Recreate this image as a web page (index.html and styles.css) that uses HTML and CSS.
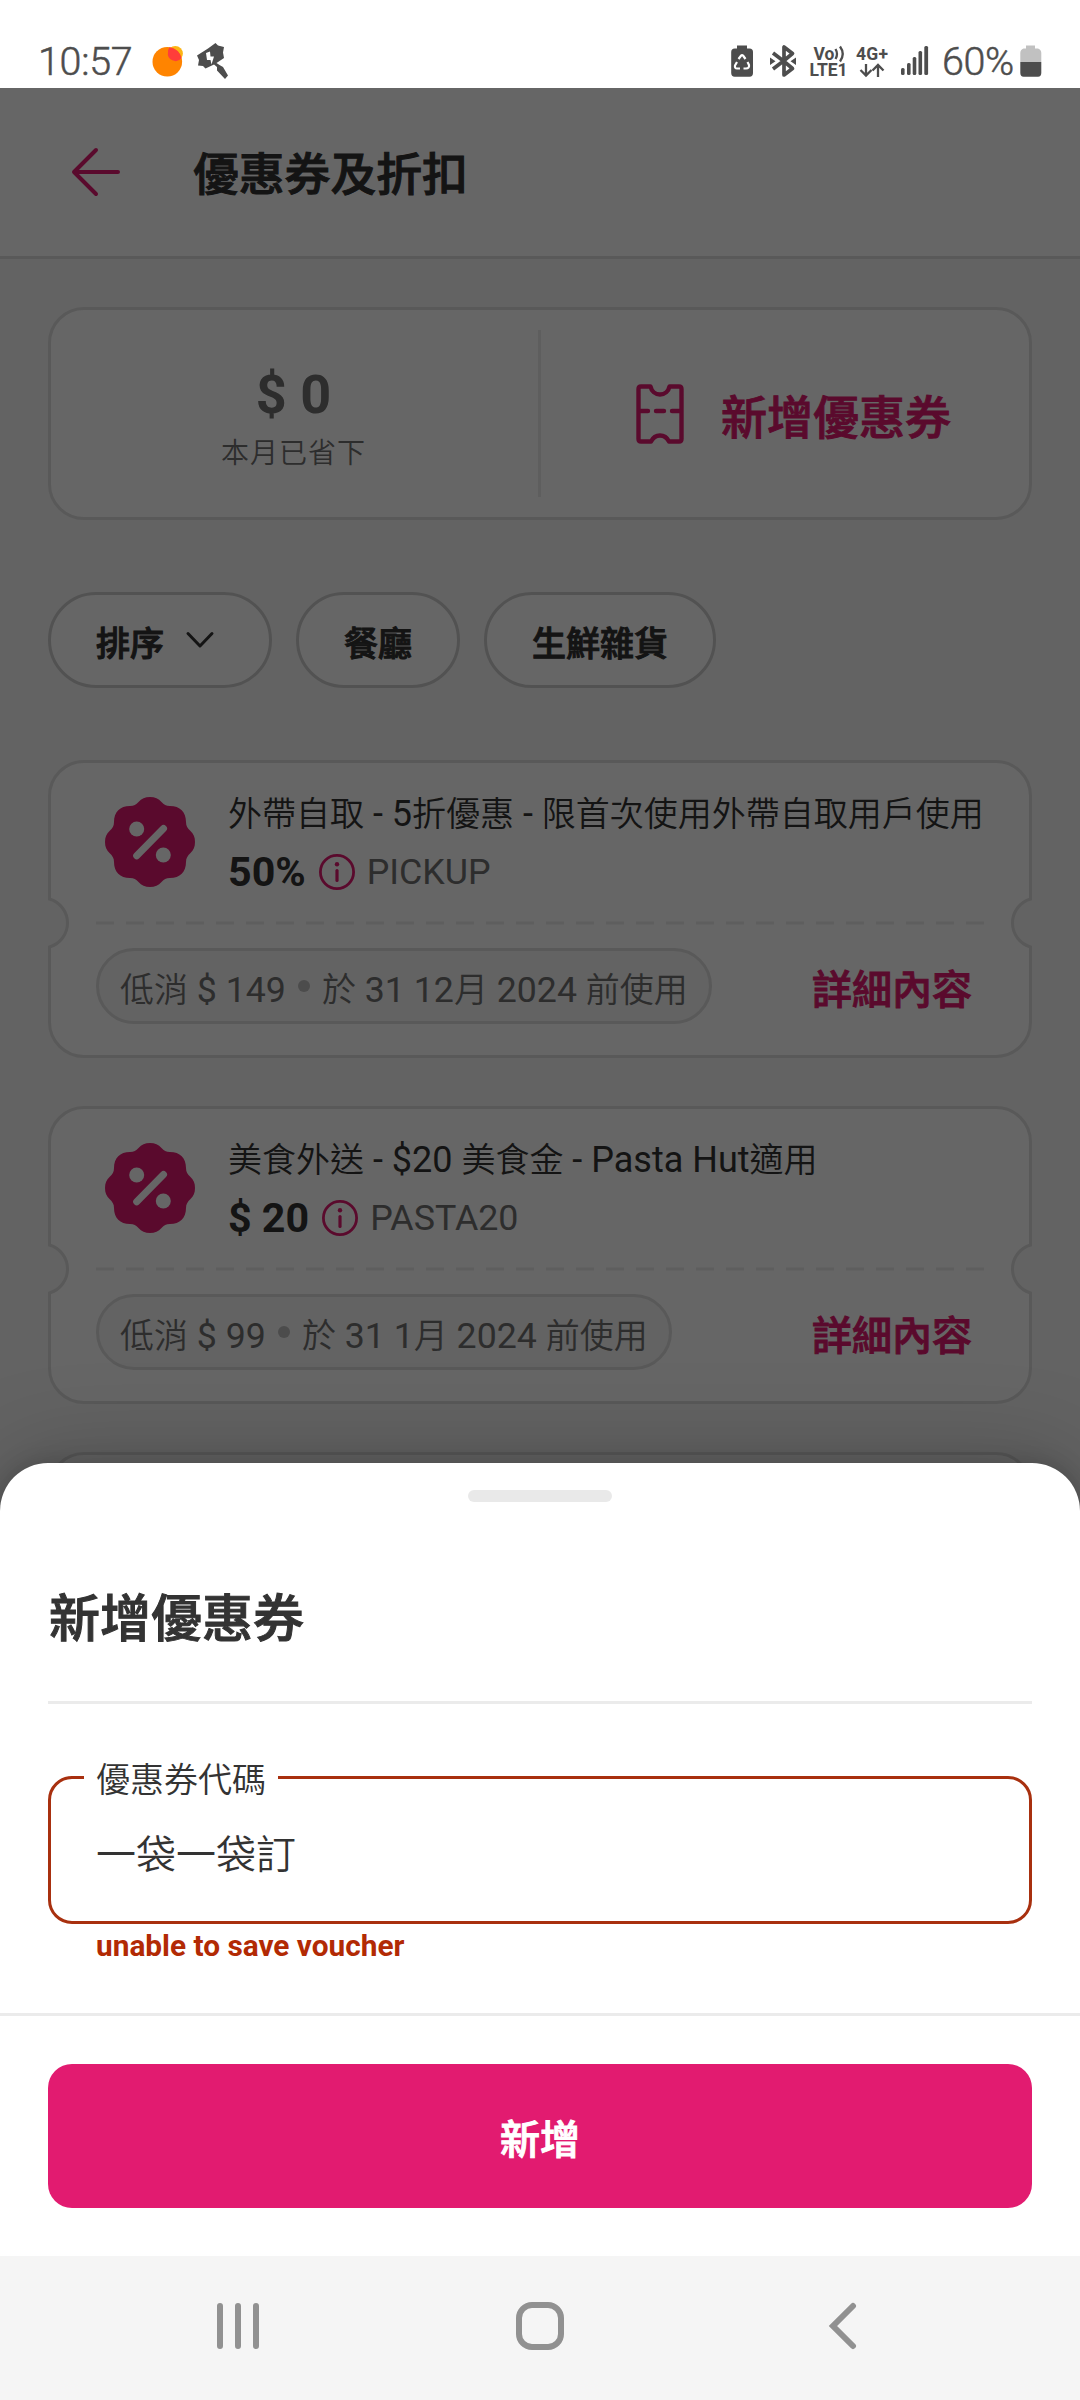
FILE: index.html
```html
<!DOCTYPE html>
<html lang="zh-Hant">
<head>
<meta charset="utf-8">
<title>優惠券及折扣</title>
<link rel="stylesheet" href="styles.css">
</head>
<body>
<svg class="defs" width="0" height="0">
  <symbol id="badge" viewBox="0 0 90 90">
    <path fill="#e21b70" d="M45 0C50 0 53.500 1.500 56.500 5C59 7.800 61 9 65 9C75 9 81 15 81 25C81 29 82.500 31 85.500 34C88.500 37 90 40 90 45C90 50 88.500 53 85.500 56C82.500 59 81 61 81 65C81 75 75 81 65 81C61 81 59 82.200 56.500 85C53.500 88.500 50 90 45 90C40 90 36.500 88.500 33.500 85C31 82.200 29 81 25 81C15 81 9 75 9 65C9 61 7.500 59 4.500 56C1.500 53 0 50 0 45C0 40 1.500 37 4.500 34C7.500 31 9 29 9 25C9 15 15 9 25 9C29 9 31 7.800 33.500 5C36.500 1.500 40 0 45 0Z"/>
    <circle cx="31.700" cy="32" r="7.500" fill="#fff"/>
    <circle cx="58.300" cy="58" r="7.500" fill="#fff"/>
    <path d="M58.500 31.500L31.700 58.700" stroke="#fff" stroke-width="7" stroke-linecap="round"/>
  </symbol>
  <symbol id="info" viewBox="0 0 36 36">
    <circle cx="18" cy="18" r="16.600" fill="none" stroke="#e21b70" stroke-width="2.800"/>
    <circle cx="18" cy="10.200" r="2.200" fill="#e21b70"/>
    <path d="M18 16.500V26.500" stroke="#e21b70" stroke-width="3.200" stroke-linecap="round"/>
  </symbol>
  <symbol id="ticket-frame" viewBox="0 0 984 298">
    <path fill="#fff" stroke="#dedede" stroke-width="3" d="M36 1.500H948A34.500 34.500 0 0 1 982.500 36V139A25 25 0 0 0 982.500 187V262A34.500 34.500 0 0 1 948 296.500H36A34.500 34.500 0 0 1 1.500 262V187A25 25 0 0 0 1.500 139V36A34.500 34.500 0 0 1 36 1.500Z"/>
    <path stroke="#ebebeb" stroke-width="3" stroke-dasharray="18 12" d="M48 163H936"/>
  </symbol>
</svg>
<div class="screen">
  <header class="status">
    <span class="clock">10:57</span>
    <svg class="status-left" width="80" height="44" viewBox="148 38 80 44">
      <circle cx="175.300" cy="53.500" r="7.600" fill="#fcb414"/>
      <circle cx="167.300" cy="61.700" r="14.800" fill="#ff8400"/>
      <path d="M168 52A7.600 7.600 0 0 0 181.500 58A15 15 0 0 0 169.500 47.200A7.600 7.600 0 0 0 168 52Z" fill="#ff3d3a"/>
      <path fill="#4d4d4d" fill-rule="evenodd" d="M215.500 43L218 45.500L224 47L223 52.500L224 58L216.500 63L219.500 65L223 67L228 75.500L225 79L217 70.500L217 67L214 64.500L205.500 68.500L203 66L198 65.500L199 60L197 55.500L208 48.500ZM206 53L207 60H210.500L211.500 64.500L214 56.500H210.500L210 51.500Z"/>
    </svg>
    <svg class="status-icons" width="202" height="44" viewBox="730 38 202 44">
      <g fill="#4d4d4d">
        <path d="M737 48.500V45.500H747V48.500H749.500Q753 48.500 753 52V73Q753 76.700 749.500 76.700H734.700Q731.200 76.700 731.200 73V52Q731.200 48.500 734.700 48.500Z"/>
        <path d="M770 57.500L775.500 61.200L770 65ZM796 57.500L790.500 61.200L796 65Z"/>
        <rect x="901" y="68" width="3.600" height="7" rx="1.500"/><rect x="907" y="63" width="3.600" height="12" rx="1.500"/><rect x="912.700" y="57" width="3.600" height="18" rx="1.500"/><rect x="918.500" y="51" width="3.600" height="24" rx="1.500"/><rect x="924.300" y="46" width="3.800" height="29" rx="1.500"/>
      </g>
      <path fill="none" stroke="#fff" stroke-width="2.200" stroke-linejoin="round" d="M738.500 59L741.200 55.500Q742 54.500 743 55.500L745.500 59M747.500 62L749 65Q749.500 68.500 746 68.500H743.500M740 68.500H737Q734.500 68.500 735 65.500L737 62"/>
      <path fill="none" stroke="#4d4d4d" stroke-width="3.700" stroke-linejoin="round" d="M773 53L783.500 61L792.500 53.500L784 47V75L792.500 68.500L783.500 61L773 69"/>
      <g fill="none" stroke="#4d4d4d" stroke-width="2.300"><path d="M835.500 49Q838.500 54 835.500 59M840 46.500Q845.500 54 840 61.500M866 64V75M860.500 70L866 75.500L871.500 70M878 77V65M872.500 70.500L878 65L883.500 70.500"/></g>
      <g class="net" fill="#4d4d4d"><text x="813.500" y="59.500" textLength="21">Vo</text><text x="809.500" y="76" textLength="38">LTE1</text><text x="856" y="59.500" textLength="32">4G+</text></g>
    </svg>
    <span class="percent">60%</span>
    <svg class="battery" width="22" height="32" viewBox="0 0 22 32">
      <path fill="#c1c1c1" d="M6 3.500V.5H15V3.500H18Q21.300 4.500 21.300 8V17H.3V8Q.3 4.500 3.500 3.500Z"/>
      <path fill="#4d4d4d" d="M.3 17H21.300V28Q21.300 31.700 18 31.700H3.600Q.3 31.700 .3 28Z"/>
    </svg>
  </header>

  <main class="app">
    <div class="appbar">
      <svg width="50" height="50" viewBox="0 0 50 50" fill="none" stroke="#e21b70" stroke-width="4" stroke-linecap="round" stroke-linejoin="round"><path d="M25 3L3 25L25 47M3 25H47"/></svg>
      <h1>優惠券及折扣</h1>
    </div>
    <div class="content">
      <section class="summary">
        <div class="saved"><strong>$ 0</strong><span>本月已省下</span></div>
        <div class="add">
          <svg width="48" height="60" viewBox="0 0 48 60" fill="none" stroke="#e21b70" stroke-width="4.400" stroke-linejoin="round" stroke-linecap="round"><path d="M5 2.500H14.500C15.500 7 19 10.500 24 10.500S32.500 7 33.500 2.500H43Q45.500 2.500 45.500 5V55Q45.500 57.500 43 57.500H33C31 53.500 28 51.500 24 51.500S17 53.500 15 57.500H5Q2.500 57.500 2.500 55V5Q2.500 2.500 5 2.500ZM3 27H12M20 27H28M36 27H45"/></svg>
          <span>新增優惠券</span>
        </div>
      </section>
      <div class="filters">
        <div class="chip"><span>排序</span><svg width="48" height="48" viewBox="0 0 48 48" fill="none" stroke="#333" stroke-width="3" stroke-linecap="round" stroke-linejoin="round"><path d="M12 17.500L24 30L36 17.500"/></svg></div>
        <div class="chip"><span>餐廳</span></div>
        <div class="chip"><span>生鮮雜貨</span></div>
      </div>
      <div class="vouchers">
        <article class="voucher">
          <svg class="frame"><use href="#ticket-frame"/></svg>
          <div class="top">
            <svg class="badge"><use href="#badge"/></svg>
            <div class="desc">
              <div class="name">外帶自取<i> - 5</i>折優惠<i> - </i>限首次使用外帶自取用戶使用</div>
              <div class="value"><b>50%</b><svg><use href="#info"/></svg><span>PICKUP</span></div>
            </div>
          </div>
          <div class="bottom">
            <div class="terms"><span>低消<i> $ 149</i></span><em></em><span>於<i> 31 12</i>月<i> 2024 </i>前使用</span></div>
            <a>詳細內容</a>
          </div>
        </article>
        <article class="voucher">
          <svg class="frame"><use href="#ticket-frame"/></svg>
          <div class="top">
            <svg class="badge"><use href="#badge"/></svg>
            <div class="desc">
              <div class="name">美食外送<i> - $20 </i>美食金<i> - Pasta Hut</i>適用</div>
              <div class="value"><b>$ 20</b><svg><use href="#info"/></svg><span>PASTA20</span></div>
            </div>
          </div>
          <div class="bottom">
            <div class="terms"><span>低消<i> $ 99</i></span><em></em><span>於<i> 31 1</i>月<i> 2024 </i>前使用</span></div>
            <a>詳細內容</a>
          </div>
        </article>
        <article class="voucher"><svg class="frame"><use href="#ticket-frame"/></svg></article>
      </div>
    </div>
    <div class="scrim"></div>
    <section class="sheet">
      <div class="handle"></div>
      <h2>新增優惠券</h2>
      <div class="field">
        <label>優惠券代碼</label>
        <div class="input">一袋一袋訂</div>
      </div>
      <p class="error">unable to save voucher</p>
      <div class="actions"><div class="button">新增</div></div>
    </section>
  </main>

  <nav class="navbar">
    <svg width="48" height="48" viewBox="0 0 48 48"><path fill="none" stroke="#919191" stroke-width="6" stroke-linecap="round" d="M6 4V44M24 4V44M42 4V44"/></svg>
    <svg width="48" height="48" viewBox="0 0 48 48"><rect x="3" y="3" width="42" height="42" rx="13" fill="none" stroke="#919191" stroke-width="6"/></svg>
    <svg width="48" height="48" viewBox="0 0 48 48"><path fill="none" stroke="#919191" stroke-width="6" stroke-linecap="round" d="M35 4L15 24L35 44"/></svg>
  </nav>
</div>
</body>
</html>
```
FILE: styles.css
```css
* { box-sizing: border-box; margin: 0; padding: 0; }
body { font-family: Roboto, "Noto Sans CJK TC", sans-serif; color: #333; }
svg { display: block; flex: none; }
.defs { position: absolute; }
i { font-style: normal; font-size: 36px; font-weight: 400; white-space: pre; }

/* medium weight, slightly thickened */
h1, h2, .add span, .chip span, a, .button { font-weight: 500; -webkit-text-stroke: 1px currentColor; }

.screen { width: 1080px; height: 2400px; display: flex; flex-direction: column; overflow: hidden; background: #fff; }

.status { height: 88px; flex: none; display: flex; align-items: center; padding: 34px 38px 0 38px; color: #4d4d4d; }
.clock, .percent { font-size: 39.500px; line-height: 44px; font-weight: 300; -webkit-text-stroke: .5px currentColor; padding-top: 2px; }
.clock { width: 110px; letter-spacing: -.3px; }
.status-left { margin-top: -2px; }
.status-icons { margin: -2px 10px 0 auto; }
.net { font: 700 17.500px Roboto, sans-serif; }
.percent { width: 74px; letter-spacing: -.4px; }
.battery { margin-left: 4px; }

.app { position: relative; flex: 1; min-height: 0; overflow: hidden; background: #f7f7f7; }
.appbar { height: 171px; display: flex; align-items: center; gap: 72px; padding: 0 71px; background: #fff; border-bottom: 3px solid #dedede; }
h1 { font-size: 45.800px; line-height: 60px; padding-top: 8px; }
.content { padding: 48px 48px 0; display: flex; flex-direction: column; }

.summary { height: 213px; display: flex; background: #fff; border: 3px solid #dedede; border-radius: 36px; }
.saved { position: relative; width: 490px; display: flex; flex-direction: column; align-items: center; padding: 53px 2px 0 0; border-right: 3px solid; border-image: linear-gradient(transparent 21px, #ebebeb 21px, #ebebeb 186px, transparent 186px) 1; color: #707070; }
.saved strong { font-size: 54px; line-height: 64px; font-weight: 700; }
.saved span { font-size: 28px; font-weight: 350; letter-spacing: 1px; line-height: 40px; padding-top: 7px; }
.add { flex: 1; display: flex; align-items: center; gap: 37px; padding-left: 95px; color: #e21b70; font-size: 46px; line-height: 60px; }
.add span { padding-top: 9px; }

.filters { display: flex; gap: 24px; margin-top: 72px; }
.chip { height: 96px; display: flex; align-items: center; gap: 12px; padding: 0 45px; border: 3px solid #cdcdcd; border-radius: 48px; background: #fff; font-size: 34px; line-height: 44px; }
.chip span { padding-top: 7px; }

.vouchers { display: flex; flex-direction: column; gap: 48px; margin-top: 72px; }
.voucher { position: relative; height: 298px; padding: 29px 60px 0 48px; display: flex; flex-direction: column; }
.frame { position: absolute; left: 0; top: 0; width: 984px; height: 298px; }
.top { position: relative; display: flex; height: 159px; padding: 8px 0 0 9px; gap: 33px; }
.badge { width: 90px; height: 90px; }
.desc { display: flex; flex-direction: column; }
.name { font-size: 34px; font-weight: 350; line-height: 44px; white-space: nowrap; margin-top: -5px; }
.value { display: flex; align-items: center; height: 48px; margin-top: 12px; font-size: 35.800px; color: #707070; }
.value b { font-size: 41.200px; color: #333; }
.value svg { width: 36px; height: 36px; margin: 0 12px 0 13px; }
.bottom { position: relative; display: flex; justify-content: space-between; align-items: center; height: 76px; }
.terms { height: 76px; display: flex; align-items: center; padding: 0 21px; border: 3px solid #dedede; border-radius: 38px; background: #f7f7f7; color: #707070; font-size: 34px; font-weight: 350; line-height: 44px; }
.terms i { font-size: 35.700px; }
.terms span { padding-top: 8px; white-space: nowrap; }
.terms em { width: 12px; height: 12px; margin: 0 12px; border-radius: 50%; background: #bdbdbd; }
a { color: #e21b70; font-size: 40px; line-height: 50px; padding-top: 10px; }

.scrim { position: absolute; inset: 0; background: rgba(0,0,0,.6); }

.sheet { position: absolute; left: 0; right: 0; bottom: 0; height: 793px; padding: 27px 48px 0; display: flex; flex-direction: column; background: #fff; border-radius: 48px 48px 0 0; box-shadow: 0 0 100px rgba(0,0,0,.22), 0 0 24px rgba(0,0,0,.18); }
.handle { width: 144px; height: 12px; border-radius: 6px; background: #e9e9e9; align-self: center; }
h2 { height: 202px; padding: 86px 0 0 1px; font-size: 51px; line-height: 64px; border-bottom: 3px solid #ebebeb; }
.field { position: relative; height: 148px; margin-top: 72px; padding: 47px 45px 0; border: 3px solid #a8300f; border-radius: 24px; flex: none; }
label { position: absolute; left: 33px; top: -21px; width: 194px; padding-left: 12px; background: #fff; font-size: 34px; font-weight: 350; line-height: 44px; }
.input { font-size: 40px; font-weight: 350; line-height: 60px; }
.error { height: 89px; padding: 4px 0 0 48px; color: #b22a04; font-size: 29.800px; line-height: 36px; font-weight: 700; }
.actions { margin: 0 -48px; padding: 48px; border-top: 3px solid #ebebeb; }
.button { height: 144px; border-radius: 24px; background: #e21b70; color: #fff; font-size: 40px; line-height: 138px; padding-top: 8px; text-align: center; }

.navbar { height: 144px; flex: none; display: flex; justify-content: space-between; padding: 46px 214px 0; background: #f5f5f5; }
```
